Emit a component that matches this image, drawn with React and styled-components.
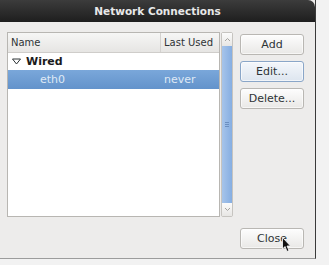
import React from 'react';
import styled, { createGlobalStyle } from 'styled-components';

const Global = createGlobalStyle`
  html, body { margin: 0; padding: 0; background: #f2f2f2; }
  body { width: 329px; height: 265px; overflow: hidden; font-family: "DejaVu Sans", sans-serif; }
`;

const Screen = styled.div`
  width: 329px;
  height: 265px;
  display: flex;
  flex-direction: column;
`;

const Window = styled.div`
  width: 316px;
  height: 259px;
  display: flex;
  flex-direction: column;
  background: #edeceb;
  border-right: 1px solid #3a3a3a;
  border-bottom: 1px solid #9c9c9c;
  box-sizing: border-box;
`;

const TitleBar = styled.div`
  height: 22px;
  flex: none;
  background: linear-gradient(#3c3c3c, #1e1e1e);
  border-top-right-radius: 7px;
  color: #e8e8e8;
  font-size: 10.5px;
  font-weight: bold;
  display: flex;
  align-items: center;
  justify-content: center;
`;

const Body = styled.div`
  flex: 1;
  display: flex;
  flex-direction: column;
  padding: 10px 11px 8px 7px;
`;

const Top = styled.div`
  display: flex;
`;

const ListWrap = styled.div`
  width: 213px;
  height: 185px;
  flex: none;
  border: 1px solid #b8b6b2;
  background: #fff;
  box-sizing: border-box;
  display: flex;
  flex-direction: column;
`;

const Header = styled.div`
  height: 20px;
  display: flex;
  background: linear-gradient(#f6f6f5, #e6e5e3);
  border-bottom: 1px solid #cfcdca;
  font-size: 10px;
  color: #2e3436;
  box-sizing: border-box;
  white-space: nowrap;
`;

const HeaderCell = styled.div`
  width: ${p => p.w}px;
  flex: ${p => (p.w ? 'none' : 1)};
  padding-left: 3px;
  display: flex;
  align-items: center;
  border-left: ${p => (p.sep ? '1px solid #d4d2cf' : 'none')};
`;

const Row = styled.div`
  height: ${p => p.h}px;
  display: flex;
  align-items: center;
  font-size: 11px;
  white-space: nowrap;
  background: ${p => (p.sel ? 'linear-gradient(#7aa7da, #6393cb)' : 'transparent')};
  color: ${p => (p.sel ? '#dfe9f5' : '#1a1a1a')};
`;

const Cell = styled.div`
  width: ${p => p.w}px;
  flex: none;
  padding-left: ${p => p.pl}px;
  box-sizing: border-box;
  display: flex;
  align-items: center;
  font-weight: ${p => (p.bold ? 'bold' : 'normal')};
`;

const Scroll = styled.div`
  width: 12px;
  height: 185px;
  flex: none;
  margin-left: 1px;
  display: flex;
  flex-direction: column;
  border: 1px solid #c6c4c0;
  border-radius: 2px;
  box-sizing: border-box;
  background: #e9e8e6;
`;

const Arrow = styled.div`
  height: 13px;
  background: linear-gradient(#fbfbfb, #e7e6e4);
  display: flex;
  align-items: center;
  justify-content: center;
`;

const Thumb = styled.div`
  flex: 1;
  background: linear-gradient(90deg, #a6c4ea, #86aee2);
  display: flex;
  align-items: center;
  justify-content: center;
`;

const Buttons = styled.div`
  display: flex;
  flex-direction: column;
  gap: 6px;
  margin-left: 7px;
  padding-top: 2px;
`;

const Button = styled.div`
  width: 64px;
  height: 21px;
  box-sizing: border-box;
  border: 1px solid ${p => (p.focus ? '#8aa6c8' : '#b9b7b3')};
  border-radius: 3px;
  background: ${p => (p.focus ? 'linear-gradient(#f4f7fb, #dde5ef)' : 'linear-gradient(#fdfdfd, #e9e8e6)')};
  box-shadow: inset 0 0 0 1px rgba(255,255,255,0.6);
  font-size: 11px;
  color: #2e3436;
  display: flex;
  align-items: center;
  justify-content: center;
`;

const Bottom = styled.div`
  flex: 1;
  display: flex;
  justify-content: flex-end;
  align-items: flex-end;
  padding-bottom: 1px;
`;

const CloseWrap = styled.div`
  position: relative;
`;

const Cursor = styled.svg`
  position: absolute;
  left: 42px;
  top: 9px;
`;

const Tri = () => (
  <svg width="9" height="7" viewBox="0 0 9 7">
    <path d="M0.5 1 H8.5 L4.5 6 Z" fill="none" stroke="#2e3436" strokeWidth="1" />
  </svg>
);

const Chevron = ({ up }) => (
  <svg width="7" height="5" viewBox="0 0 7 5">
    <path d={up ? 'M1 4 L3.5 1.5 L6 4' : 'M1 1 L3.5 3.5 L6 1'} fill="none" stroke="#a5a4a1" strokeWidth="1" />
  </svg>
);

const Grip = () => (
  <svg width="4" height="6" viewBox="0 0 4 6">
    <path d="M0 0.5 H4 M0 2.5 H4 M0 4.5 H4" stroke="#6b8fc0" strokeWidth="1" />
  </svg>
);

export default function App() {
  return (
    <Screen>
      <Global />
      <Window>
        <TitleBar>Network Connections</TitleBar>
        <Body>
          <Top>
            <ListWrap>
              <Header>
                <HeaderCell w={149}>Name</HeaderCell>
                <HeaderCell sep>Last Used</HeaderCell>
              </Header>
              <Row h={17}>
                <Cell w={18} pl={4}><Tri /></Cell>
                <Cell bold pl={0}>Wired</Cell>
              </Row>
              <Row h={19} sel>
                <Cell w={156} pl={32}>eth0</Cell>
                <Cell pl={0}>never</Cell>
              </Row>
            </ListWrap>
            <Scroll>
              <Arrow><Chevron up /></Arrow>
              <Thumb><Grip /></Thumb>
              <Arrow><Chevron /></Arrow>
            </Scroll>
            <Buttons>
              <Button>Add</Button>
              <Button focus>Edit...</Button>
              <Button>Delete...</Button>
            </Buttons>
          </Top>
          <Bottom>
            <CloseWrap>
              <Button>Close</Button>
              <Cursor width="10" height="16" viewBox="0 0 10 16">
                <path d="M0.5 0.5 L0.5 12 L3 9.5 L5 14.5 L7 13.5 L5 9 L8.5 9 Z" fill="#111" stroke="#fff" strokeWidth="0.8" />
              </Cursor>
            </CloseWrap>
          </Bottom>
        </Body>
      </Window>
    </Screen>
  );
}
